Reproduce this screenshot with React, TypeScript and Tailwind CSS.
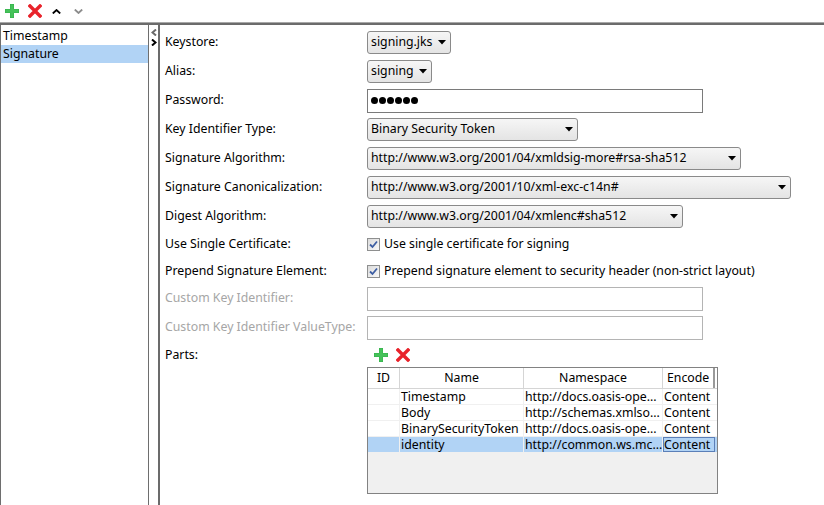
import React from 'react';

const font = { fontFamily: '"Noto Sans", "Open Sans", sans-serif' };

const PlusIcon = () => (
  <svg width="14" height="14" viewBox="0 0 14 14">
    <path d="M5 0h4v5h5v4H9v5H5V9H0V5h5z" fill="#33b04a" />
    <path d="M5.5 0.5h3v5h5v3h-5v5h-3v-5h-5v-3h5z" fill="#46c25a" />
  </svg>
);

const CrossIcon = () => (
  <svg width="14" height="14" viewBox="0 0 14 14">
    <path d="M2 2L12 12M12 2L2 12" stroke="#e8232b" strokeWidth="3.4" strokeLinecap="square" />
  </svg>
);

const Caret = () => (
  <svg width="8" height="5" viewBox="0 0 8 5" className="ml-auto shrink-0">
    <path d="M0 0h8L4 4.5z" fill="#000" />
  </svg>
);

const Select = ({ value, w }: { value: string; w: string }) => (
  <div
    className={`${w} h-[23px] flex items-center pl-[3px] pr-[4px] rounded-[3px] border border-[#8a8a8a] bg-gradient-to-b from-[#f6f6f6] to-[#e4e4e4] text-[12.3px] text-black whitespace-nowrap`}
  >
    <span>{value}</span>
    <Caret />
  </div>
);

const TextBox = ({ children, disabled }: { children?: React.ReactNode; disabled?: boolean }) => (
  <div
    className={`w-[336px] h-[24px] flex items-center pl-[3px] border ${disabled ? 'border-[#b4b4b4]' : 'border-[#7a7a7a]'} bg-white`}
  >
    {children}
  </div>
);

const Check = ({ label }: { label: string }) => (
  <div className="flex items-center gap-[4px] text-[12.3px] text-black">
    <div className="w-[13px] h-[13px] border border-[#8e8f8f] bg-gradient-to-br from-[#dcdcdc] to-[#f8f8f8] flex items-center justify-center">
      <svg width="9" height="9" viewBox="0 0 9 9">
        <path d="M1 4.5L3.5 7L8 1.5" stroke="#3d5ea3" strokeWidth="1.8" fill="none" />
      </svg>
    </div>
    <span>{label}</span>
  </div>
);

const parts = [
  { name: 'Timestamp', ns: 'http://docs.oasis-ope...', enc: 'Content' },
  { name: 'Body', ns: 'http://schemas.xmlso...', enc: 'Content' },
  { name: 'BinarySecurityToken', ns: 'http://docs.oasis-ope...', enc: 'Content' },
  { name: 'identity', ns: 'http://common.ws.mc...', enc: 'Content', selected: true },
];

const Label = ({ text, disabled }: { text: string; disabled?: boolean }) => (
  <span className={`text-[12.3px] whitespace-nowrap ${disabled ? 'text-[#a6a6a6]' : 'text-black'}`}>{text}</span>
);

export default function App() {
  return (
    <div className="w-[824px] h-[505px] bg-white flex flex-col overflow-hidden" style={font}>
      <div className="h-[22px] flex items-center pl-[5px] gap-[9px] shrink-0">
        <PlusIcon />
        <CrossIcon />
        <svg width="9" height="5" viewBox="0 0 9 5" className="ml-[1px]">
          <path d="M0.8 4.5L4.5 1L8.2 4.5" stroke="#000" strokeWidth="1.8" fill="none" />
        </svg>
        <svg width="9" height="5" viewBox="0 0 9 5" className="ml-[4px]">
          <path d="M0.8 0.5L4.5 4L8.2 0.5" stroke="#8c8c8c" strokeWidth="1.8" fill="none" />
        </svg>
      </div>
      <div className="h-[3px] shrink-0 border-t border-[#a8a8a8] bg-[#6b6b6b]" />
      <div className="flex flex-1 min-h-0">
        <div className="w-[149px] border-l border-r border-[#6e6e6e] pt-[3px] text-[12.3px] text-black">
          <div className="h-[17px] pl-[2px] flex items-center">Timestamp</div>
          <div className="h-[18px] pl-[2px] flex items-center bg-[#b1d3f5]">Signature</div>
        </div>
        <div className="w-[9px] flex flex-col items-center pt-[4px] gap-[3px]">
          <svg width="6" height="7" viewBox="0 0 6 7">
            <path d="M5 0.5L1.5 3.5L5 6.5" stroke="#6a6a6a" strokeWidth="2" fill="none" />
          </svg>
          <svg width="6" height="7" viewBox="0 0 6 7">
            <path d="M1 0.5L4.5 3.5L1 6.5" stroke="#000" strokeWidth="2" fill="none" />
          </svg>
        </div>
        <div className="w-[2px] bg-[#6b6b6b]" />
        <div className="flex-1 pl-[5px] pt-[3px]">
          <div className="grid grid-cols-[202px_1fr] auto-rows-[29px] items-center">
            <Label text="Keystore:" />
            <Select value="signing.jks" w="w-[84px]" />
            <Label text="Alias:" />
            <Select value="signing" w="w-[65px]" />
            <Label text="Password:" />
            <TextBox>
              <span className="flex gap-[1px]">
                {Array.from({ length: 6 }).map((_, i) => (
                  <span key={i} className="w-[7px] h-[7px] rounded-full bg-black" />
                ))}
              </span>
            </TextBox>
            <Label text="Key Identifier Type:" />
            <Select value="Binary Security Token" w="w-[211px]" />
            <Label text="Signature Algorithm:" />
            <Select value="http://www.w3.org/2001/04/xmldsig-more#rsa-sha512" w="w-[374px]" />
            <Label text="Signature Canonicalization:" />
            <Select value="http://www.w3.org/2001/10/xml-exc-c14n#" w="w-[424px]" />
            <Label text="Digest Algorithm:" />
            <Select value="http://www.w3.org/2001/04/xmlenc#sha512" w="w-[316px]" />
          </div>
          <div className="grid grid-cols-[202px_1fr] grid-rows-[27px_26px_29px_29px] items-center">
            <Label text="Use Single Certificate:" />
            <Check label="Use single certificate for signing" />
            <Label text="Prepend Signature Element:" />
            <Check label="Prepend signature element to security header (non-strict layout)" />
            <Label text="Custom Key Identifier:" disabled />
            <TextBox disabled />
            <Label text="Custom Key Identifier ValueType:" disabled />
            <TextBox disabled />
          </div>
          <div className="grid grid-cols-[202px_1fr]">
            <div className="h-[26px] flex items-center">
              <Label text="Parts:" />
            </div>
            <div>
              <div className="h-[25px] flex items-center pl-[7px] gap-[8px]">
                <PlusIcon />
                <CrossIcon />
              </div>
              <div className="w-[351px] h-[127px] border border-[#828282] bg-[#f0f0f0] text-[12.3px] text-black">
                <div className="h-[21px] flex bg-white border-b border-[#d5d5d5]">
                  <div className="w-[32px] flex items-center justify-center border-r border-[#d5d5d5]">ID</div>
                  <div className="w-[124px] flex items-center justify-center border-r border-[#d5d5d5]">Name</div>
                  <div className="w-[139px] flex items-center justify-center border-r border-[#d5d5d5]">Namespace</div>
                  <div className="w-[52px] flex items-center pl-[4px] border-r-2 border-[#9a9a9a] overflow-hidden whitespace-nowrap">Encode</div>
                </div>
                {parts.map((p) => (
                  <div
                    key={p.name}
                    className={`h-[16px] flex leading-[15px] whitespace-nowrap border-b border-[#f0f0f0] ${p.selected ? 'bg-[#b1d3f5]' : 'bg-white'}`}
                  >
                    <div className="w-[32px] border-r border-[#f0f0f0]" />
                    <div className="w-[124px] pl-[1px] overflow-hidden border-r border-[#f0f0f0]">{p.name}</div>
                    <div className="w-[139px] pl-[1px] overflow-hidden border-r border-[#f0f0f0]">{p.ns}</div>
                    <div className={`w-[52px] overflow-hidden ${p.selected ? 'border border-[#5b7fb8] leading-[13px]' : 'pl-[1px]'}`}>{p.enc}</div>
                  </div>
                ))}
              </div>
            </div>
          </div>
        </div>
      </div>
    </div>
  );
}
